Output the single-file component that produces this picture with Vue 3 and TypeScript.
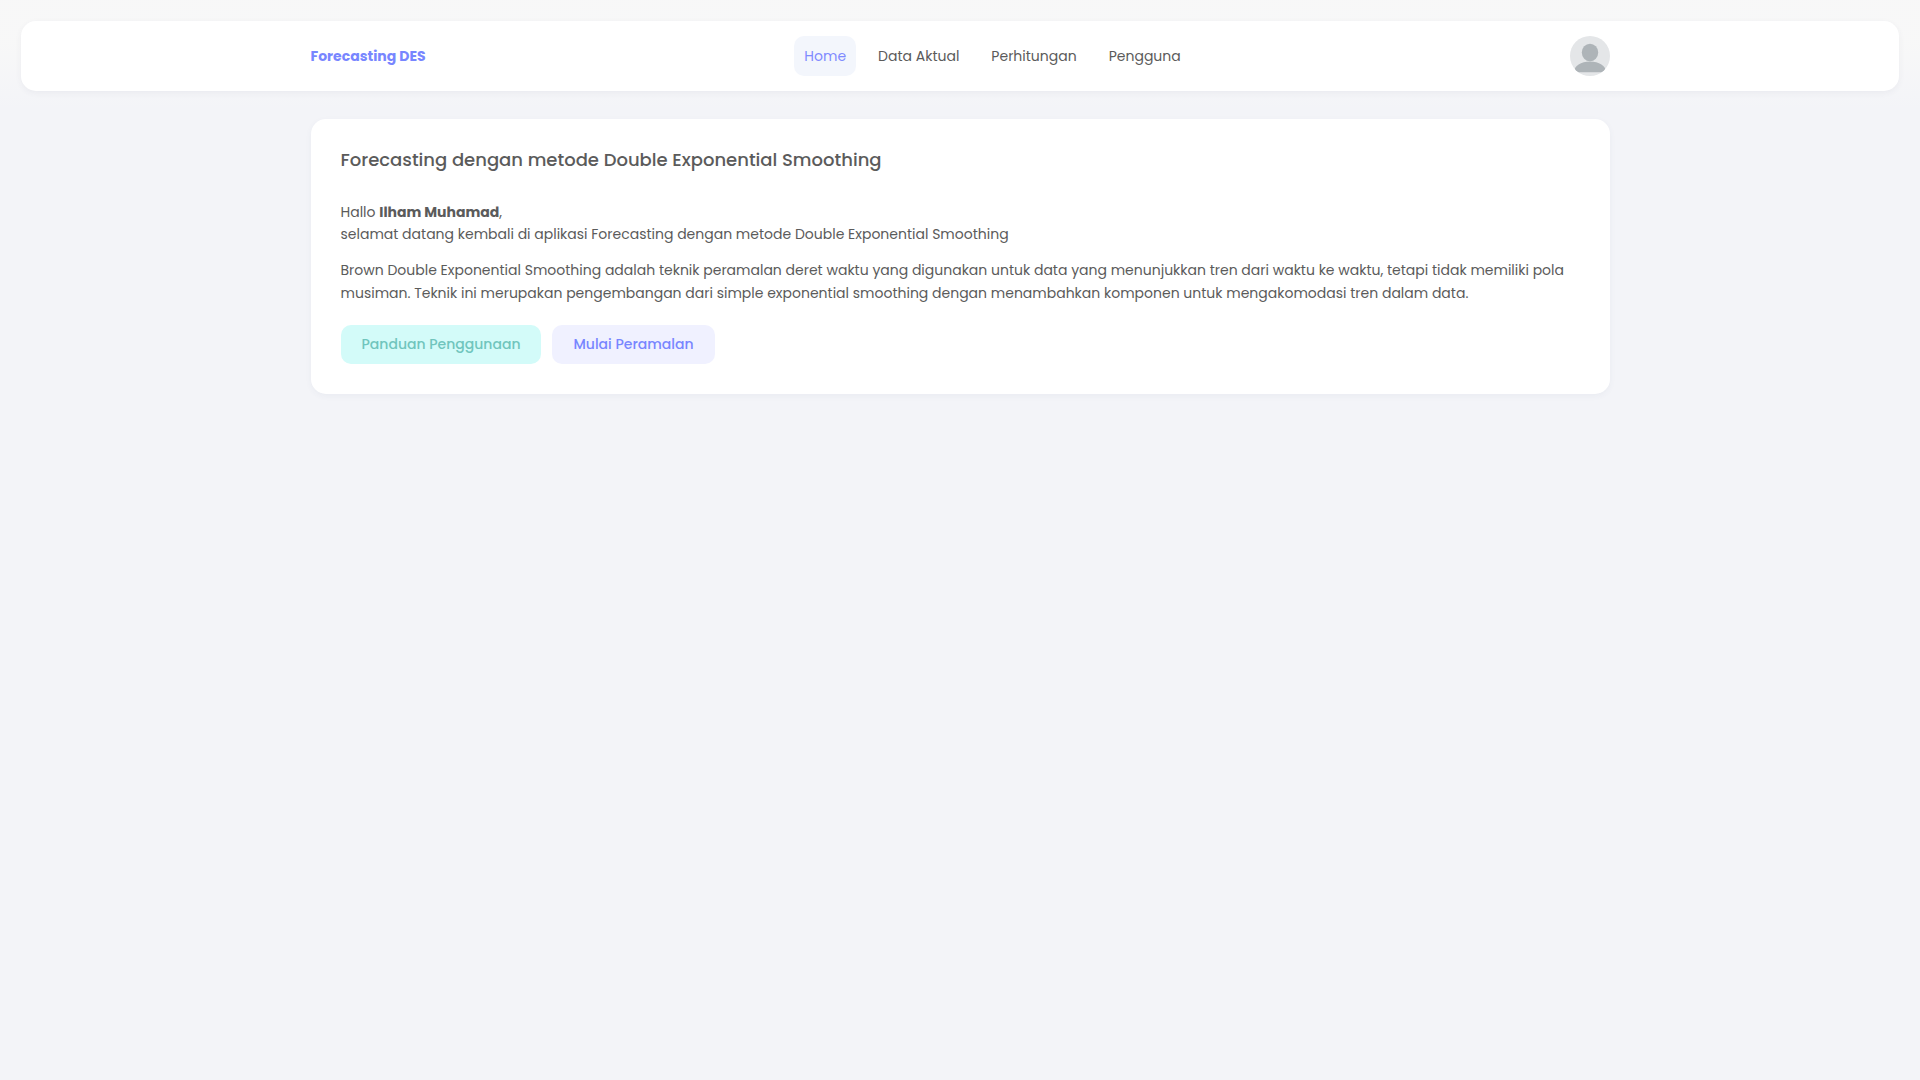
<script setup lang="ts">
interface NavItem {
  label: string
  active?: boolean
}

const navItems: NavItem[] = [
  { label: 'Home', active: true },
  { label: 'Data Aktual' },
  { label: 'Perhitungan' },
  { label: 'Pengguna' },
]

const userName = 'Ilham Muhamad'
</script>

<template>
  <div class="page">
    <header class="topbar">
      <div class="navbar">
        <div class="container navbar-inner">
          <a class="brand" href="#">Forecasting DES</a>
          <nav class="menu">
            <a
              v-for="item in navItems"
              :key="item.label"
              href="#"
              class="menu-link"
              :class="{ active: item.active }"
              >{{ item.label }}</a
            >
          </nav>
          <button class="avatar" type="button" aria-label="Akun">
            <svg viewBox="0 0 40 40" width="40" height="40" aria-hidden="true">
              <clipPath id="avatar-clip"><circle cx="20" cy="20" r="20" /></clipPath>
              <g clip-path="url(#avatar-clip)">
                <rect width="40" height="40" fill="#e4e6e8" />
                <ellipse cx="20" cy="16.5" rx="8.2" ry="8.7" fill="#aeb4b8" />
                <path d="M4 36.3C4 30 11 25.6 20 25.6S36 30 36 36.3Z" fill="#aeb4b8" />
              </g>
            </svg>
          </button>
        </div>
      </div>
    </header>

    <main class="container">
      <section class="card">
        <h1>Forecasting dengan metode Double Exponential Smoothing</h1>
        <p class="greeting">
          Hallo <strong>{{ userName }}</strong>,<br />
          selamat datang kembali di aplikasi Forecasting dengan metode Double Exponential Smoothing
        </p>
        <p>
          Brown Double Exponential Smoothing adalah teknik peramalan deret waktu yang digunakan untuk
          data yang menunjukkan tren dari waktu ke waktu, tetapi tidak memiliki pola musiman. Teknik
          ini merupakan pengembangan dari simple exponential smoothing dengan menambahkan komponen
          untuk mengakomodasi tren dalam data.
        </p>
        <div class="actions">
          <button class="btn btn-guide" type="button">Panduan Penggunaan</button>
          <button class="btn btn-start" type="button">Mulai Peramalan</button>
        </div>
      </section>
    </main>
  </div>
</template>

<style>
body {
  margin: 0;
  background: #f3f4f8;
}
</style>

<style scoped>
.page {
  min-height: 100vh;
  color: #5b5b5b;
  font-family: Poppins, Inter, 'Open Sans', sans-serif;
  font-size: 14px;
  line-height: 23px;
}

.container {
  box-sizing: border-box;
  width: 100%;
  max-width: 1299px;
  margin: 0 auto;
}

.topbar {
  padding: 21px 21px 28px;
  background: linear-gradient(
    180deg,
    rgba(248, 248, 248, 0.95) 37%,
    rgba(248, 248, 248, 0.46) 66%,
    rgba(255, 255, 255, 0) 92%
  );
}

.navbar {
  padding: 15px 24px;
  border-radius: 15px;
  background: #fff;
  box-shadow: 0 2px 6px rgba(60, 70, 110, 0.06);
}

.navbar-inner {
  display: flex;
  align-items: center;
  justify-content: space-between;
}

.brand {
  color: #7886ff;
  font-weight: 700;
  text-decoration: none;
}

.menu {
  display: flex;
  gap: 12px;
  margin-right: 10px;
}

.menu-link {
  padding: 0 10px;
  border-radius: 10px;
  color: #5b5b5b;
  line-height: 40px;
  text-decoration: none;
}

.menu-link.active {
  background: #f3f6fc;
  color: #7f8aff;
}

.avatar {
  display: block;
  width: 40px;
  height: 40px;
  padding: 0;
  border: 0;
  border-radius: 50%;
  background: none;
  cursor: pointer;
}

.avatar svg {
  display: block;
}

.card {
  padding: 30px;
  border-radius: 15px;
  background: #fff;
  box-shadow: 0 2px 6px rgba(60, 70, 110, 0.05);
}

h1 {
  margin: 0 0 30px;
  font-size: 18px;
  font-weight: 500;
  line-height: 22px;
}

p {
  margin: 0 0 13px;
}

.greeting {
  margin-bottom: 14px;
  line-height: 22px;
}

.actions {
  display: flex;
  gap: 11px;
  margin-top: 20px;
}

.btn {
  padding: 0 21px;
  border: 0;
  border-radius: 10px;
  font: inherit;
  font-weight: 500;
  line-height: 39px;
  cursor: pointer;
}

.btn-guide {
  background: #d3fbf9;
  color: #70c5bd;
}

.btn-start {
  background: #f0f1ff;
  color: #7886ff;
}
</style>
